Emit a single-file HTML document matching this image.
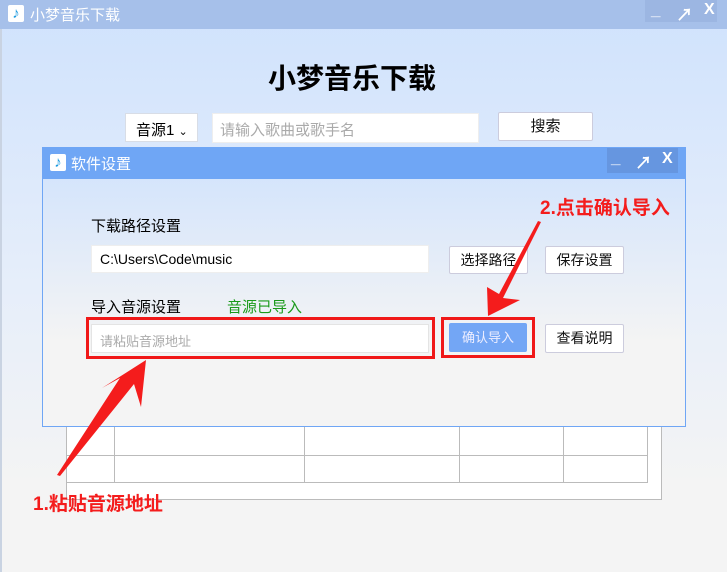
<!DOCTYPE html>
<html><head><meta charset="utf-8"><style>
*{margin:0;padding:0;box-sizing:border-box}
body{width:727px;height:572px;overflow:hidden;position:relative;font-family:"Liberation Sans","Noto Sans CJK SC",sans-serif;background:linear-gradient(#cfe2fd 0%,#e6eefa 50%,#f4f4f4 85%)}
.a{position:absolute}
.tb{left:0;top:0;width:727px;height:29px;background:#a6c0ea;color:#fff;font-size:14px}
.ic{width:16px;height:17px;background:#fff;border-radius:2px;color:#1e9be0;font-size:15px;line-height:17px;text-align:center;font-weight:bold}
.ctl{color:#fff;font-size:17px;font-weight:bold}
.box{background:#fff;border:1px solid #d8dde6}
.btn{background:#fff;border:1px solid #ccd;border-radius:2px;text-align:center;font-size:14px;color:#111}
.red{border:3px solid #f01818}
.rl{color:#f41c1c;font-weight:bold;font-size:19px}
</style></head><body>
<div class="a tb">
 <div class="a ic" style="left:8px;top:5px">♪</div>
 <div class="a" style="left:30px;top:4px;font-size:15px">小梦音乐下载</div>
 <div class="a" style="left:645px;top:0;width:72px;height:22px;background:#9cb6e2"></div>
 <div class="a ctl" style="left:651px;top:0px">_</div>
 <div class="a ctl" style="left:676px;top:1px">↗</div>
 <div class="a ctl" style="left:704px;top:1px;font-size:16px">X</div>
</div>
<div class="a" style="left:0;top:29px;width:2px;height:543px;background:#c9d3e2"></div>
<div class="a" style="left:268px;top:57px;font-size:28px;font-weight:bold;color:#000">小梦音乐下载</div>
<div class="a box" style="left:125px;top:113px;width:73px;height:29px;font-size:15px;padding:5px 0 0 10px">音源1 <span style="font-size:11px">⌄</span></div>
<div class="a box" style="left:212px;top:113px;width:267px;height:30px;font-size:15px;color:#aaa;padding:5px 0 0 7px;border-color:#eee">请输入歌曲或歌手名</div>
<div class="a btn" style="left:498px;top:112px;width:95px;height:29px;font-size:15px;line-height:27px">搜索</div>

<div class="a" style="left:66px;top:420px;width:596px;height:80px;background:#fff;border:1px solid #bbb"></div>
<div class="a" style="left:66px;top:420px;width:582px;height:63px;border:1px solid #bbb;border-top:none"></div>
<div class="a" style="left:66px;top:455px;width:582px;height:1px;background:#bbb"></div>
<div class="a" style="left:114px;top:420px;width:1px;height:63px;background:#bbb"></div>
<div class="a" style="left:304px;top:420px;width:1px;height:63px;background:#bbb"></div>
<div class="a" style="left:459px;top:420px;width:1px;height:63px;background:#bbb"></div>
<div class="a" style="left:563px;top:420px;width:1px;height:63px;background:#bbb"></div>

<div class="a" style="left:42px;top:147px;width:644px;height:280px;border:1px solid #6fa6f5;background:linear-gradient(#cfe2fd,#f4f4f4 70%)">
 <div class="a" style="left:0;top:0;width:642px;height:31px;background:#6fa6f5;color:#fff;font-size:15px">
  <div class="a ic" style="left:7px;top:6px">♪</div>
  <div class="a" style="left:28px;top:5px">软件设置</div>
  <div class="a" style="left:564px;top:0;width:71px;height:25px;background:#6696e0"></div>
  <div class="a ctl" style="left:568px;top:0">_</div>
  <div class="a ctl" style="left:592px;top:1px">↗</div>
  <div class="a ctl" style="left:619px;top:2px;font-size:16px">X</div>
 </div>
</div>
<div class="a" style="left:91px;top:215px;font-size:15px">下载路径设置</div>
<div class="a box" style="left:91px;top:245px;width:338px;height:28px;font-size:14px;padding:5px 0 0 8px;border-color:#eee">C:\Users\Code\music</div>
<div class="a btn" style="left:449px;top:246px;width:79px;height:28px;line-height:26px">选择路径</div>
<div class="a btn" style="left:545px;top:246px;width:79px;height:28px;line-height:26px">保存设置</div>
<div class="a" style="left:91px;top:296px;font-size:15px">导入音源设置</div>
<div class="a" style="left:227px;top:296px;font-size:15px;color:#1a9a1a">音源已导入</div>
<div class="a red" style="left:86px;top:317px;width:349px;height:42px"></div>
<div class="a box" style="left:91px;top:324px;width:338px;height:29px;font-size:13px;color:#aaa;padding:6px 0 0 8px;border-color:#e4e4e4">请粘贴音源地址</div>
<div class="a red" style="left:441px;top:317px;width:94px;height:41px"></div>
<div class="a" style="left:449px;top:323px;width:78px;height:29px;background:#73a6f5;color:#eef;font-size:13px;line-height:29px;text-align:center;border-radius:2px">确认导入</div>
<div class="a btn" style="left:545px;top:324px;width:79px;height:29px;line-height:27px">查看说明</div>

<svg class="a" style="left:0;top:0" width="727" height="572">
 <polygon points="57,475 120,378 102,388 146,360 141,407 134,384 60,476" fill="#f41c1c"/>
 <polygon points="541,222 503,298 520,300 488,316 487,287 499,294 538,221" fill="#f41c1c"/>
</svg>
<div class="a rl" style="left:540px;top:193px">2.点击确认导入</div>
<div class="a rl" style="left:33px;top:489px">1.粘贴音源地址</div>
</body></html>
